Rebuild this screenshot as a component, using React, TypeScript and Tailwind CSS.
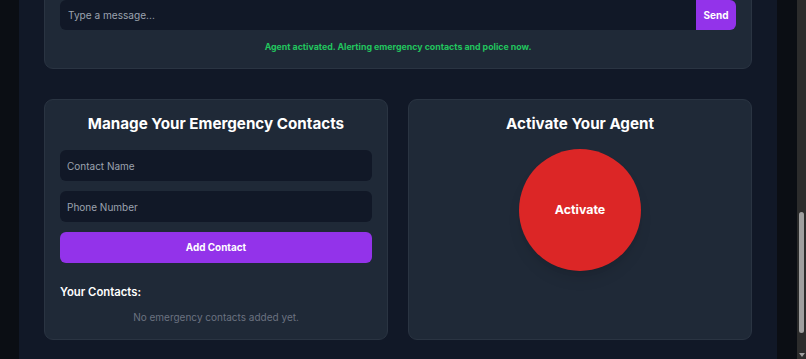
export default function App() {
  return (
    <div className="flex h-[359px] w-full overflow-hidden bg-[#0b0e14] font-['Inter',sans-serif]">
      <div className="w-[19px] shrink-0" />
      <main className="flex-1 bg-[#111827] px-[25px]">
        {/* chat card, scrolled partly out of view */}
        <section className="-mt-[16px] rounded-[9px] border border-[#2a3442] bg-[#1f2937] px-[15px] pt-[15px] pb-[13px]">
          <div className="flex h-[30px]">
            <input
              className="h-full flex-1 rounded-l-[6px] bg-[#111827] px-[8px] text-[10.1px] text-gray-200 placeholder-[#9ca3af] outline-none"
              placeholder="Type a message..."
            />
            <button className="h-full w-[40px] rounded-r-[6px] bg-[#9333ea] text-[10px] font-bold text-white">
              Send
            </button>
          </div>
          <p className="mt-[9px] text-center text-[8.8px] font-bold leading-[16px] text-[#22c55e]">
            Agent activated. Alerting emergency contacts and police now.
          </p>
        </section>

        <div className="mt-[30px] grid grid-cols-2 gap-[20px]">
          <section className="flex h-[241px] flex-col rounded-[9px] border border-[#2a3442] bg-[#1f2937] px-[15px] pt-[10px]">
            <h2 className="text-center text-[15.2px] font-bold leading-[28px] text-white">
              Manage Your Emergency Contacts
            </h2>
            <div className="mt-[12px] flex flex-col gap-[10px]">
              <input
                className="h-[31px] rounded-[6px] bg-[#111827] px-[7px] text-[10px] text-gray-200 placeholder-[#9ca3af] outline-none"
                placeholder="Contact Name"
              />
              <input
                className="h-[31px] rounded-[6px] bg-[#111827] px-[7px] text-[10px] text-gray-200 placeholder-[#9ca3af] outline-none"
                placeholder="Phone Number"
              />
              <button className="h-[31px] rounded-[6px] bg-[#9333ea] text-[9.9px] font-bold text-white">
                Add Contact
              </button>
            </div>
            <h3 className="mt-[20px] text-[11.3px] font-semibold leading-[18px] text-white">Your Contacts:</h3>
            <p className="mt-[8px] text-center text-[10px] leading-[16px] text-[#6b7280]">
              No emergency contacts added yet.
            </p>
          </section>

          <section className="flex h-[241px] flex-col items-center rounded-[9px] border border-[#2a3442] bg-[#1f2937] px-[15px] pt-[10px]">
            <h2 className="text-center text-[15.2px] font-bold leading-[28px] text-white">Activate Your Agent</h2>
            <button className="mt-[11px] flex h-[122px] w-[122px] items-center justify-center rounded-full bg-[#dc2626] text-[12.4px] font-bold text-white shadow-lg">
              Activate
            </button>
          </section>
        </div>
      </main>
      <div className="w-[20px] shrink-0" />
      <div className="flex w-[9px] shrink-0 flex-col items-center bg-[#2c2c2c]">
        <div className="mt-[212px] h-[121px] w-[5px] rounded-full bg-[#9f9f9f]" />
        <div className="mt-auto mb-[2px] h-0 w-0 border-x-[3px] border-t-[4px] border-x-transparent border-t-[#9f9f9f]" />
      </div>
    </div>
  );
}
